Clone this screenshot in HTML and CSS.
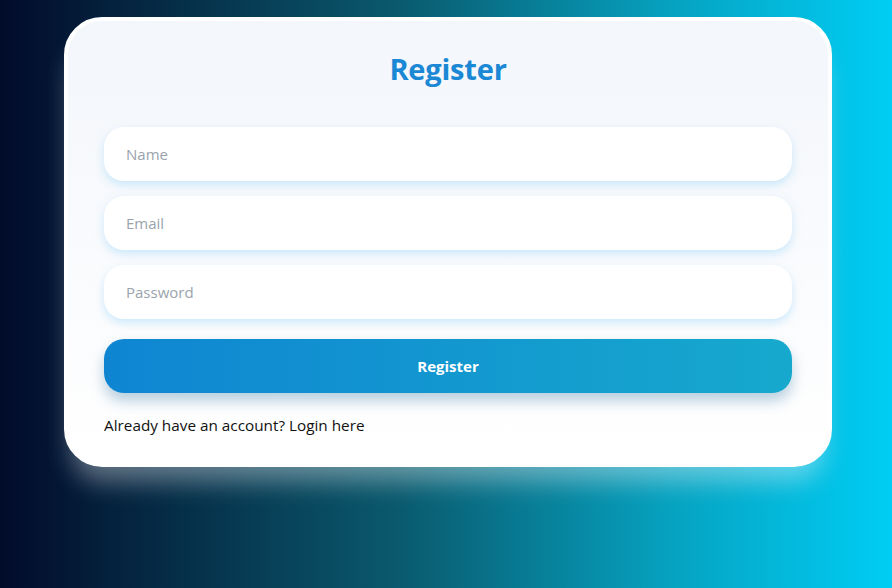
FILE: index.html
```html
<!DOCTYPE html>
<html lang="en">
<head>
<meta charset="utf-8">
<title>Register</title>
<link rel="stylesheet" href="styles.css">
</head>
<body>
<div class="page">
  <form class="card">
    <h1 class="title">Register</h1>
    <input class="field" type="text" placeholder="Name">
    <input class="field" type="email" placeholder="Email">
    <input class="field" type="password" placeholder="Password">
    <button class="btn" type="button">Register</button>
    <p class="note">Already have an account? Login here</p>
  </form>
</div>
</body>
</html>
```
FILE: styles.css
```css
html, body {
  margin: 0;
  height: 100%;
}
body {
  font-family: "Open Sans", "Noto Sans", sans-serif;
  background: linear-gradient(90deg, #020b2a 0%, #0a5a6e 45%, #06a2c0 75%, #00cdf4 100%);
}
.page {
  display: flex;
  justify-content: center;
  padding-top: 17px;
  padding-left: 4px;
}
.card {
  box-sizing: border-box;
  width: 768px;
  border: 4px solid #ffffff;
  border-radius: 38px;
  background: linear-gradient(180deg, #f3f6fb 0%, #ffffff 100%);
  padding: 28px 36px 28px;
  display: flex;
  flex-direction: column;
  gap: 15px;
  box-shadow: 0 22px 26px -8px rgba(255, 255, 255, 0.38);
}
.title {
  margin: 0 0 24px;
  text-align: center;
  font-size: 29px;
  font-weight: 700;
  color: #1a88d4;
  letter-spacing: -0.2px;
}
.field {
  box-sizing: border-box;
  height: 54px;
  border: none;
  border-radius: 20px;
  background: #ffffff;
  padding: 0 22px;
  font-family: inherit;
  font-size: 15px;
  color: #333;
  box-shadow: 0 4px 8px rgba(160, 215, 250, 0.5);
  outline: none;
}
.field::placeholder {
  color: #9aa3ad;
}
.btn {
  margin-top: 5px;
  height: 54px;
  border: none;
  border-radius: 20px;
  background: linear-gradient(90deg, #0f85d2 0%, #16a9cd 100%);
  color: #ffffff;
  font-family: inherit;
  font-size: 15px;
  font-weight: 700;
  box-shadow: 0 8px 14px rgba(20, 100, 150, 0.3);
}
.note {
  margin: 7px 0 0;
  font-size: 15.3px;
  color: #111;
}
```
